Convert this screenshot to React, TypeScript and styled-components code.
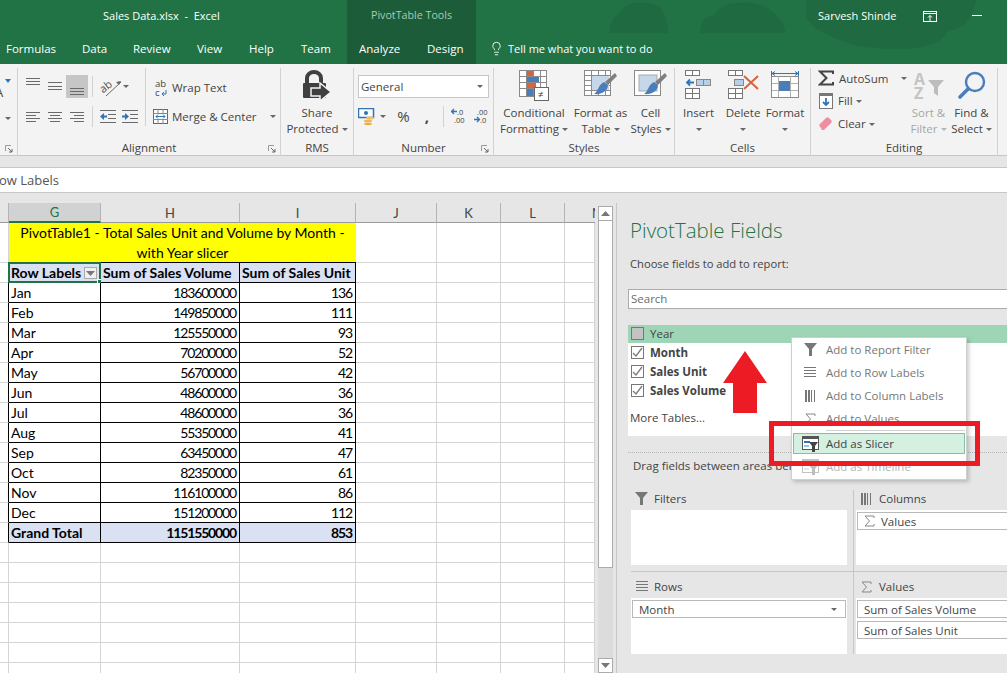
import React from 'react';
import styled, { createGlobalStyle } from 'styled-components';
import { Lightbulb } from 'lucide-react';

const UI_FONT = '"Open Sans", "Noto Sans", sans-serif';
const CELL_FONT = 'Lato, "Liberation Sans", sans-serif';

const GlobalStyle = createGlobalStyle`
  html, body { margin: 0; padding: 0; background: #e6e6e6; }
  * { box-sizing: border-box; }
`;

const Page = styled.div`
  position: relative;
  width: 1007px;
  height: 673px;
  overflow: hidden;
  display: flex;
  flex-direction: column;
  font-family: ${UI_FONT};
  font-size: 11.5px;
  color: #444;
`;

/* ---------- header ---------- */

const Header = styled.header`
  position: relative;
  height: 64px;
  background: #217346;
  color: #fff;
`;

const HeaderArt = styled.svg`
  position: absolute;
  left: 0;
  top: 0;
`;

const BarRow = styled.div`
  position: relative;
  height: 32px;
  display: flex;
  align-items: center;
`;

const FileTitle = styled.div`
  width: 347px;
  margin-top: -2px;
  padding-left: 103px;
  font-size: 11px;
  white-space: pre;
`;

const ContextBand = styled.div<{ $muted?: boolean }>`
  width: 129px;
  height: 32px;
  background: #1c5c38;
  display: flex;
  align-items: center;
  justify-content: ${({ $muted }) => ($muted ? 'center' : 'flex-start')};
  padding: ${({ $muted }) => ($muted ? '0 0 2px' : '0 0 0 12px')};
  font-size: ${({ $muted }) => ($muted ? '10.7px' : '11.5px')};
  color: ${({ $muted }) => ($muted ? '#a5cdb5' : '#fff')};
`;

const UserName = styled.div`
  margin: -2px 0 0 auto;
  width: 105px;
  font-size: 11px;
`;

const WindowButton = styled.div<{ $w: number }>`
  width: ${({ $w }) => $w}px;
  display: flex;
`;

const TabStrip = styled.nav`
  width: 347px;
  height: 32px;
  display: flex;
  align-items: center;
  padding-left: 6px;
`;

const Tab = styled.div<{ $w: number }>`
  width: ${({ $w }) => $w}px;
`;

const TellMe = styled.div`
  display: flex;
  align-items: center;
  gap: 4px;
  padding-left: 13px;
  font-size: 11px;
`;

/* ---------- ribbon ---------- */

const Ribbon = styled.section`
  height: 92px;
  background: #f3f3f3;
  border-bottom: 1px solid #c6c6c6;
  display: flex;
  flex: none;
`;

const Group = styled.div<{ $w: number }>`
  position: relative;
  width: ${({ $w }) => $w}px;
  height: 88px;
  margin-top: 4px;
  border-right: 1px solid #d2d2d2;
  display: flex;
  flex-direction: column;
  flex: none;
`;

const GroupBody = styled.div`
  flex: 1;
  display: flex;
  min-height: 0;
`;

const GroupLabel = styled.div`
  height: 15px;
  line-height: 14px;
  text-align: center;
`;

const Launcher = styled.svg`
  position: absolute;
  right: 4px;
  bottom: 3px;
`;

const PartialTools = styled.div`
  display: flex;
  flex-direction: column;
  padding: 11px 0 0 5px;
  gap: 24px;
`;

const PartialFont = styled.div`
  display: flex;
  align-items: flex-start;
  gap: 2px;
  height: 14px;
  margin-left: -10px;
  font-size: 13px;
  line-height: 26px;
`;

const BigButton = styled.div<{ $w: number; $off?: boolean }>`
  width: ${({ $w }) => $w}px;
  flex: none;
  display: flex;
  flex-direction: column;
  align-items: center;
  text-align: center;
  white-space: nowrap;
  line-height: 16px;
  color: ${({ $off }) => ($off ? '#a6a6a6' : '#444')};
`;

const BigIcon = styled.div`
  height: 33px;
  margin: 2px 0;
  display: flex;
  align-items: flex-start;
  justify-content: center;
`;

const Caret = styled.span<{ $gap?: number; $off?: boolean }>`
  display: inline-block;
  width: 0;
  height: 0;
  margin-left: ${({ $gap }) => $gap ?? 3}px;
  vertical-align: 2px;
  border-left: 3px solid transparent;
  border-right: 3px solid transparent;
  border-top: 3px solid ${({ $off }) => ($off ? '#b5b5b5' : '#666')};
`;

const AlignColumn = styled.div`
  width: 128px;
  height: 58px;
  display: flex;
  flex-direction: column;
  gap: 7px;
  padding: 7px 0 0 4px;
  border-right: 1px solid #d2d2d2;
  flex: none;
`;

const IconRow = styled.div`
  display: flex;
  align-items: center;
  height: 23px;
`;

const IconCell = styled.div<{ $w?: number; $on?: boolean }>`
  width: ${({ $w }) => $w ?? 22}px;
  height: 23px;
  flex: none;
  display: flex;
  align-items: center;
  justify-content: center;
  background: ${({ $on }) => ($on ? '#c6c6c6' : 'transparent')};
`;

const MiniRule = styled.div`
  width: 1px;
  height: 21px;
  background: #d2d2d2;
  margin: 0 4px;
  flex: none;
`;

const WrapColumn = styled.div`
  flex: 1;
  display: flex;
  flex-direction: column;
  gap: 6px;
  padding: 8px 0 0 7px;
`;

const SmallAction = styled.div`
  display: flex;
  align-items: center;
  gap: 4px;
  height: 23px;
  white-space: nowrap;
`;

const EditingColumn = styled.div`
  width: 97px;
  flex: none;
  display: flex;
  flex-direction: column;
  margin-top: -1px;
  padding-left: 7px;

  ${SmallAction} {
    height: 22.5px;
    gap: 5px;
  }
`;

const NumberColumn = styled.div`
  flex: 1;
  padding: 7px 5px 0 4px;
`;

const NumberFormat = styled.div`
  height: 23px;
  width: 131px;
  background: #fff;
  border: 1px solid #c6c6c6;
  padding: 0 5px 0 2px;
  display: flex;
  align-items: center;
  justify-content: space-between;
`;

const NumberTools = styled.div`
  display: flex;
  align-items: center;
  margin-top: 6px;
  height: 24px;
`;

const Percent = styled.span`
  font-size: 15px;
  width: 27px;
  text-align: center;
  margin-left: 4px;
`;

const Comma = styled.span`
  font-size: 15px;
  font-weight: 700;
  width: 20px;
  text-align: center;
  line-height: 10px;
`;

const NumberRule = styled(MiniRule)`
  margin: 0 7px 0 6px;
`;

const DecimalGap = styled.span`
  width: 8px;
`;

/* ---------- formula bar ---------- */

const Gutter = styled.div`
  height: 11px;
  flex: none;
  background: #e6e6e6;
`;

const FormulaBar = styled.div`
  height: 26px;
  flex: none;
  background: #fff;
  border-top: 1px solid #c6c6c6;
  border-bottom: 1px solid #c6c6c6;
  display: flex;
  align-items: center;
  font-size: 13px;
  color: #555;
`;

const FormulaText = styled.div`
  margin-left: -1px;
`;

/* ---------- sheet ---------- */

const Workspace = styled.main`
  flex: 1;
  min-height: 0;
  display: flex;
`;

const SheetArea = styled.div`
  width: 598px;
  flex: none;
  padding-top: 10px;
  overflow: hidden;
  background: #e6e6e6;
`;

const SheetGrid = styled.div`
  display: grid;
  width: 595px;
  grid-template-columns: 9px 92px 139px 116px 81px 64px 64px 30px;
  grid-auto-rows: 20px;
  background: #fff;
  border-right: 1px solid #ababab;
  font-family: ${CELL_FONT};
  font-size: 14px;
  color: #000;
`;

const ColumnHead = styled.div<{ $active?: boolean; $clip?: boolean }>`
  height: 20px;
  display: flex;
  align-items: center;
  justify-content: ${({ $clip }) => ($clip ? 'flex-start' : 'center')};
  padding-left: ${({ $clip }) => ($clip ? 27 : 0)}px;
  overflow: hidden;
  font-size: 13px;
  background: ${({ $active }) => ($active ? '#d2d2d2' : '#e6e6e6')};
  color: ${({ $active }) => ($active ? '#217346' : '#444')};
  border-right: ${({ $clip }) => ($clip ? 'none' : '1px solid #b4b4b4')};
  border-bottom: ${({ $active }) => ($active ? '2px solid #217346' : '1px solid #9b9b9b')};
`;

const MergedTitle = styled.div`
  grid-column: span 3;
  grid-row: span 2;
  background: #ff0;
  border-bottom: 1px solid #000;
  text-align: center;
  line-height: 20px;
  padding: 0 8px;
`;

const TallCell = styled.div`
  grid-row: span 2;
  border-right: 1px solid #d4d4d4;
  border-bottom: 1px solid #d4d4d4;
`;

const BlankCell = styled.div<{ $dark?: boolean }>`
  border-right: 1px solid ${({ $dark }) => ($dark ? '#000' : '#d4d4d4')};
  border-bottom: 1px solid #d4d4d4;
`;

const PivotCell = styled.div<{ $right?: boolean; $head?: boolean; $bold?: boolean }>`
  position: relative;
  display: flex;
  align-items: center;
  justify-content: ${({ $right }) => ($right ? 'flex-end' : 'flex-start')};
  padding: 0 2px;
  white-space: nowrap;
  border-right: 1px solid #000;
  border-bottom: 1px solid #000;
  font-weight: ${({ $bold }) => ($bold ? 700 : 400)};
  background: ${({ $head }) => ($head ? '#d9e1f2' : '#fff')};
`;

const Amount = styled.span`
  letter-spacing: -1.15px;
  padding-right: 1px;
`;

const SelectionFrame = styled.div`
  position: absolute;
  inset: -1px;
  border: 2px solid #217346;
  pointer-events: none;
`;

const FillHandle = styled.div`
  position: absolute;
  right: -4px;
  bottom: -4px;
  width: 6px;
  height: 6px;
  background: #217346;
  border: 1px solid #fff;
`;

const FilterDrop = styled.div`
  position: absolute;
  right: 3px;
  top: 4px;
  width: 13px;
  height: 12px;
  background: #f0f0f0;
  border: 1px solid #ababab;
  display: flex;
  align-items: center;
  justify-content: center;
`;

const ScrollBar = styled.div`
  width: 15px;
  flex: none;
  margin-top: 13px;
  display: flex;
  flex-direction: column;
  background: #dcdcdc;
`;

const ScrollStep = styled.div`
  height: 15px;
  flex: none;
  background: #fff;
  border: 1px solid #ababab;
  display: flex;
  align-items: center;
  justify-content: center;
`;

const ScrollThumb = styled.div`
  height: 347px;
  flex: none;
  background: #fff;
  border: 1px solid #ababab;
  border-top-width: 0;
  margin-bottom: auto;
`;

/* ---------- field panel ---------- */

const FieldPanel = styled.aside`
  flex: 1;
  min-width: 0;
  margin-left: 3px;
  margin-top: 10px;
  border-left: 1px solid #c6c6c6;
  padding-left: 11px;
  background: #e6e6e6;
  overflow: hidden;
`;

const PanelTitle = styled.h2`
  margin: 13px 0 0 2px;
  font-weight: 300;
  font-size: 20.5px;
  line-height: 28px;
  color: #217346;
  white-space: nowrap;
`;

const PanelHint = styled.div`
  margin: 12px 0 0 2px;
  line-height: 16px;
  font-size: 11.2px;
`;

const SearchBox = styled.div`
  margin-top: 17px;
  height: 20px;
  background: #fff;
  border: 1px solid #ababab;
  border-right: none;
  padding-left: 2px;
  line-height: 17px;
  color: #6d6d6d;
`;

const FieldList = styled.div`
  margin-top: 16px;
  height: 111px;
  background: #fff;
`;

const FieldRow = styled.div<{ $hot?: boolean; $bold?: boolean }>`
  height: ${({ $hot }) => ($hot ? 18 : 19)}px;
  display: flex;
  align-items: center;
  gap: 6px;
  padding: 0 0 ${({ $hot }) => ($hot ? 1 : 0)}px 3px;
  background: ${({ $hot }) => ($hot ? '#9fd5b7' : 'transparent')};
  font-weight: ${({ $bold }) => ($bold ? 700 : 400)};
`;

const CheckBox = styled.div<{ $hot?: boolean }>`
  width: 13px;
  height: 13px;
  flex: none;
  background: ${({ $hot }) => ($hot ? '#c3c3c3' : '#fff')};
  border: 1px solid #777;
  display: flex;
  align-items: center;
  justify-content: center;
`;

const MoreTables = styled.div`
  margin: 9px 0 0 2px;
  line-height: 18px;
`;

const DropHint = styled.div`
  margin-top: 16px;
  padding: 5px 0 0 5px;
  border-top: 1px dotted #b5b5b5;
  line-height: 16px;
  white-space: nowrap;
`;

const Areas = styled.div`
  margin: 16px 0 0 3px;
  display: grid;
  grid-template-columns: 223px 1fr;
  grid-template-rows: 82px 82px;
`;

const Area = styled.div<{ $left?: boolean; $top?: boolean }>`
  display: flex;
  flex-direction: column;
  border-right: ${({ $left }) => ($left ? '1px solid #c6c6c6' : 'none')};
  border-bottom: ${({ $top }) => ($top ? '1px solid #c6c6c6' : 'none')};
  padding: ${({ $top }) => ($top ? '0' : '6px')} ${({ $left }) => ($left ? '6px' : '0')} ${({ $top }) => ($top ? '6px' : '0')} ${({ $left }) => ($left ? '0' : '2px')};
`;

const AreaHead = styled.div`
  height: 20px;
  flex: none;
  display: flex;
  align-items: center;
  gap: 6px;
  padding: 0 0 3px 4px;
`;

const AreaIcon = styled.div`
  width: 13px;
  display: flex;
  justify-content: center;
`;

const AreaWell = styled.div`
  flex: 1;
  background: #fff;
  padding-top: 2px;
  display: flex;
  flex-direction: column;
  gap: 3px;
`;

const AreaItem = styled.div<{ $bleed?: boolean }>`
  height: 18px;
  margin: 0 ${({ $bleed }) => ($bleed ? -4 : 1)}px 0 1px;
  border: 1px solid #b9b9b9;
  display: flex;
  align-items: center;
  gap: 6px;
  padding: 0 8px 0 6px;
  white-space: nowrap;
  background: #fff;
`;

const ItemCaret = styled(Caret)`
  margin-left: auto;
`;

/* ---------- overlays ---------- */

const ContextMenu = styled.div`
  position: absolute;
  left: 791px;
  top: 337px;
  width: 176px;
  height: 143px;
  padding: 0 1px;
  background: #fff;
  border: 1px solid #d0d0d0;
  box-shadow: 2px 2px 4px rgba(0, 0, 0, 0.2);
`;

const MenuItem = styled.div<{ $on?: boolean; $off?: boolean }>`
  height: ${({ $on }) => ($on ? 21 : 23)}px;
  margin-top: ${({ $off }) => ($off ? 1 : 0)}px;
  display: flex;
  align-items: center;
  border: 1px solid ${({ $on }) => ($on ? '#86bfa0' : 'transparent')};
  background: ${({ $on }) => ($on ? '#d3f0e0' : 'transparent')};
  color: ${({ $on, $off }) => ($on ? '#444' : $off ? '#b4b4b4' : '#777')};
  white-space: nowrap;
`;

const MenuGlyph = styled.div<{ $off?: boolean }>`
  width: 32px;
  display: flex;
  justify-content: center;
  flex: none;
  opacity: ${({ $off }) => ($off ? 0.35 : 1)};
`;

const MenuRule = styled.div`
  height: 1px;
  margin: 0 0 2px 33px;
  background: #d0d0d0;
`;

const RedBox = styled.div`
  position: absolute;
  left: 769px;
  top: 421px;
  width: 211px;
  height: 45px;
  border: 5px solid #ed1c24;
`;

const RedArrow = styled.svg`
  position: absolute;
  left: 723px;
  top: 351px;
`;

/* ---------- drawings ---------- */

const Lines = ({ rows }: { rows: number[] }) => (
  <svg width="14" height="18">
    {rows.map(y => (
      <line key={y} x1="0" x2="14" y1={y + 0.5} y2={y + 0.5} stroke="#6a6a6a" />
    ))}
  </svg>
);

const AlignedLines = ({ rows }: { rows: [number, number, number][] }) => (
  <svg width="14" height="14">
    {rows.map(([y, from, to]) => (
      <line key={y} x1={from} x2={to} y1={y + 0.5} y2={y + 0.5} stroke="#6a6a6a" />
    ))}
  </svg>
);

const Indent = ({ flip }: { flip?: boolean }) => (
  <svg width="16" height="13">
    <g stroke="#6a6a6a">
      <line x1="0" x2="16" y1="0.5" y2="0.5" />
      <line x1="8" x2="16" y1="4.5" y2="4.5" />
      <line x1="8" x2="16" y1="8.5" y2="8.5" />
      <line x1="0" x2="16" y1="12.5" y2="12.5" />
    </g>
    <path d={flip ? 'M0 5.5h3V3l4 3.5-4 3.5V7.500H0z' : 'M7 5.500H4V3L0 6.500 4 10V7.500h3z'} fill="#2f75b5" />
  </svg>
);

const Orientation = () => (
  <svg width="26" height="22">
    <text x="3" y="15" fontSize="11" fontFamily="Open Sans" fill="#555" transform="rotate(-38 8 12)">ab</text>
    <line x1="9" y1="20" x2="24" y2="6" stroke="#666" />
    <path d="M24 5l-5 1 3 3z" fill="#666" />
  </svg>
);

const WrapGlyph = () => (
  <svg width="15" height="22">
    <text fontSize="9.500" fontFamily="Open Sans" fill="#444">
      <tspan x="2" y="10">ab</tspan>
      <tspan x="2" y="19">c</tspan>
    </text>
    <path d="M13 13v4H9m2-2l-2 2 2 2" fill="none" stroke="#2f75b5" />
  </svg>
);

const MergeGlyph = () => (
  <svg width="15" height="15">
    <rect x="0.500" y="0.500" width="14" height="14" fill="#fff" stroke="#666" />
    <path d="M0 4.500h15M0 10.500h15M5 0v4M10 0v4M5 11v4M10 11v4" stroke="#888" />
    <path d="M3 7.500h9M5 5.500l-2 2 2 2M10 5.500l2 2-2 2" fill="none" stroke="#2f75b5" />
  </svg>
);

const LockShare = () => (
  <svg width="30" height="32">
    <path d="M5 14V8a7 6 0 0 1 14 0v6" fill="none" stroke="#404040" strokeWidth="4" />
    <rect x="1" y="13" width="23" height="15" rx="1" fill="#404040" />
    <path d="M9 18h9v-5l11 9-11 9v-5H9z" fill="#404040" stroke="#f3f3f3" strokeWidth="1.500" />
  </svg>
);

const Currency = () => (
  <svg width="17" height="17">
    <rect x="0.500" y="0.500" width="15" height="9" fill="#fff" stroke="#2f75b5" strokeWidth="1.500" />
    <circle cx="8" cy="5" r="2" fill="#2f75b5" />
    <ellipse cx="12" cy="10" rx="4" ry="1.500" fill="#f2c060" />
    <ellipse cx="10" cy="13" rx="4" ry="1.500" fill="#f2b84f" />
    <ellipse cx="10" cy="16" rx="4" ry="1" fill="#eba83a" />
  </svg>
);

const Decimals = ({ more }: { more?: boolean }) => (
  <svg width="15" height="18">
    <text fontSize="7.500" fontFamily="Open Sans" fill="#444">
      <tspan x={more ? 3 : 6} y="7.500">{more ? '.00' : '.0'}</tspan>
      <tspan x={more ? 6 : 3} y="15.500">{more ? '.0' : '.00'}</tspan>
    </text>
    {more ? (
      <path d="M0 12.500h5M3 10l2.500 2.500L3 15" fill="none" stroke="#2f75b5" strokeWidth="1.300" />
    ) : (
      <path d="M6 4.500H1M3 2L.5 4.500 3 7" fill="none" stroke="#2f75b5" strokeWidth="1.300" />
    )}
  </svg>
);

const TableBase = ({ cols, rows }: { cols: number[]; rows: number[] }) => (
  <g stroke="#8a8a8a" fill="none">
    <rect x="0.500" y="0.500" width={cols[cols.length - 1]} height={rows[rows.length - 1]} fill="#fff" />
    {cols.slice(0, -1).map(c => <line key={c} x1={c + 0.5} x2={c + 0.5} y1="0" y2={rows[rows.length - 1]} />)}
    {rows.slice(0, -1).map(r => <line key={r} y1={r + 0.5} y2={r + 0.5} x1="0" x2={cols[cols.length - 1]} />)}
  </g>
);

const ConditionalIcon = () => (
  <svg width="31" height="31">
    <TableBase cols={[7, 14, 21, 27]} rows={[6, 12, 18, 26]} />
    <rect x="8" y="1" width="6" height="5" fill="#d9623f" />
    <rect x="8" y="7" width="12" height="5" fill="#4a7ebb" />
    <rect x="8" y="13" width="9" height="5" fill="#d9623f" />
    <rect x="8" y="19" width="6" height="7" fill="#4a7ebb" />
    <rect x="15.500" y="17.500" width="14" height="13" fill="#fff" stroke="#666" />
    <text x="19" y="27.500" fontSize="10" fontFamily="Open Sans" fill="#333">≠</text>
  </svg>
);

const Brush = () => (
  <g>
    <path d="M31 3l2 3-9 9-3-3z" fill="#7f7f7f" />
    <path d="M20 12l4 3c0 6-7 10-14 9 4-2 4-9 10-12z" fill="#4a7ebb" />
  </g>
);

const TableStyleIcon = () => (
  <svg width="33" height="29">
    <TableBase cols={[7, 14, 21, 26]} rows={[5, 10, 15, 20, 25]} />
    <rect x="8" y="6" width="17" height="14" fill="#c6d7ea" />
    <Brush />
  </svg>
);

const CellStyleIcon = () => (
  <svg width="33" height="29">
    <rect x="0.500" y="0.500" width="26" height="25" fill="#fff" stroke="#8a8a8a" />
    <rect x="5" y="5" width="18" height="16" fill="#c6d7ea" stroke="#aaa" />
    <Brush />
  </svg>
);

const InsertIcon = () => (
  <svg width="27" height="29">
    <g fill="#fff" stroke="#777">
      <rect x="0.500" y="0.500" width="7" height="5" />
      <rect x="7.500" y="0.500" width="7" height="5" />
      <rect x="0.500" y="18.500" width="14" height="10" />
      <line x1="7.500" x2="7.500" y1="18" y2="28" />
      <line x1="0" x2="14" y1="23.500" y2="23.500" />
    </g>
    <rect x="11.500" y="9.500" width="7" height="6" fill="#b9cfe6" stroke="#888" />
    <rect x="18.500" y="9.500" width="7" height="6" fill="#b9cfe6" stroke="#888" />
    <path d="M9 12.500H2m3-3l-3 3 3 3" fill="none" stroke="#2f75b5" strokeWidth="1.800" />
  </svg>
);

const DeleteIcon = () => (
  <svg width="31" height="29">
    <g fill="#fff" stroke="#777">
      <rect x="0.500" y="0.500" width="7" height="5" />
      <rect x="7.500" y="0.500" width="7" height="5" />
      <rect x="0.500" y="18.500" width="14" height="10" />
      <line x1="7.500" x2="7.500" y1="18" y2="28" />
      <line x1="0" x2="14" y1="23.500" y2="23.500" />
    </g>
    <rect x="6.500" y="9.500" width="9" height="6" fill="#b9cfe6" stroke="#888" />
    <path d="M16 6l14 13M30 6L16 19" stroke="#d9623f" strokeWidth="2" />
  </svg>
);

const FormatIcon = () => (
  <svg width="29" height="31">
    <path d="M1 3.500h26M.5 1v5M27.500 1v5M4 1.500L1 3.500 4 5.500M24 1.500l3 2-3 2" fill="none" stroke="#2f75b5" />
    <rect x="0.500" y="6.500" width="27" height="21" fill="#fff" stroke="#8a8a8a" />
    <path d="M7.500 6v21M19.500 6v21M1 13.500h26M1 20.500h26" stroke="#b0b0b0" />
    <rect x="8" y="11" width="11" height="10" fill="#4a7ebb" />
  </svg>
);

const SigmaIcon = () => (
  <svg width="16" height="16">
    <path d="M15 4V1.500H2L8.500 8 2 14.500h13V12" fill="none" stroke="#444" strokeWidth="2" />
  </svg>
);

const FillIcon = () => (
  <svg width="15" height="16">
    <rect x="1.500" y="0.500" width="13" height="15" fill="#fff" stroke="#777" />
    <rect x="1" y="0" width="14" height="3" fill="#777" />
    <path d="M8 5v7M5 9l3 3 3-3" fill="none" stroke="#2f75b5" strokeWidth="1.800" />
  </svg>
);

const EraserIcon = () => (
  <svg width="15" height="14">
    <path d="M1 9l7-7c1-1 2-1 3 0l2 2c1 1 1 2 0 3l-7 7H4z" fill="#ee8ea0" />
  </svg>
);

const SortIcon = () => (
  <svg width="30" height="33" overflow="visible">
    <text fontSize="16" fontWeight="700" fontFamily="Open Sans" fill="#c4c4c4">
      <tspan x="0" y="15">A</tspan>
      <tspan x="0" y="29">Z</tspan>
    </text>
    <path d="M14 10h16l-6 7v9l-4-3v-6z" fill="#bdbdbd" />
  </svg>
);

const FindIcon = () => (
  <svg width="30" height="31">
    <circle cx="18" cy="12" r="9" fill="none" stroke="#4a7ebb" strokeWidth="2.400" />
    <path d="M11 19L3 27" stroke="#4a7ebb" strokeWidth="3.600" strokeLinecap="round" />
  </svg>
);

const LauncherGlyph = () => (
  <Launcher width="8" height="8">
    <path d="M0.500 6V.5H6" fill="none" stroke="#9a9a9a" />
    <path d="M3 3l4 4M7 4v3H4" fill="none" stroke="#666" />
  </Launcher>
);

const FunnelIcon = () => (
  <svg width="13" height="13">
    <path d="M0 0h13L8 6v7H5V6z" fill="#777" />
  </svg>
);

const RowsIcon = () => (
  <svg width="12" height="11">
    <path d="M0 .5h12M0 3.500h12M0 6.500h12M0 9.500h12" stroke="#777" />
  </svg>
);

const ColumnsIcon = () => (
  <svg width="11" height="12">
    <path d="M1 0v12M4 0v12" stroke="#777" strokeWidth="2" />
    <path d="M6.500 0v12M9.500 0v12" stroke="#777" />
  </svg>
);

const SigmaSmall = () => (
  <svg width="11" height="12">
    <path d="M10 3V1H1l4.500 5L1 11h9V9" fill="none" stroke="#888" />
  </svg>
);

const SlicerIcon = () => (
  <svg width="17" height="16">
    <rect x="0.500" y="0.500" width="16" height="13" fill="#fff" stroke="#555" />
    <rect x="0" y="0" width="17" height="3" fill="#555" />
    <rect x="2" y="5" width="6" height="2" fill="#2f75b5" />
    <rect x="2" y="9" width="5" height="2" fill="#9cc2e5" />
    <path d="M7 6h9l-3 4v6h-3v-6z" fill="#444" />
  </svg>
);

const TinyUp = () => (
  <svg width="9" height="5"><path d="M4.500 0L9 5H0z" fill="#777" /></svg>
);

const TinyDown = () => (
  <svg width="9" height="5"><path d="M0 0h9L4.500 5z" fill="#777" /></svg>
);

const Tick = () => (
  <svg width="11" height="11">
    <path d="M1 6l3 3 6-8" fill="none" stroke="#7a7a7a" strokeWidth="1.300" />
  </svg>
);

/* ---------- data ---------- */

const months: [string, string, string][] = [
  ['Jan', '183600000', '136'],
  ['Feb', '149850000', '111'],
  ['Mar', '125550000', '93'],
  ['Apr', '70200000', '52'],
  ['May', '56700000', '42'],
  ['Jun', '48600000', '36'],
  ['Jul', '48600000', '36'],
  ['Aug', '55350000', '41'],
  ['Sep', '63450000', '47'],
  ['Oct', '82350000', '61'],
  ['Nov', '116100000', '86'],
  ['Dec', '151200000', '112'],
];

const tabs: [string, number][] = [
  ['Formulas', 76],
  ['Data', 51],
  ['Review', 64],
  ['View', 52],
  ['Help', 52],
  ['Team', 46],
];

const SpareCells = () => (
  <>
    <BlankCell />
    <BlankCell />
    <BlankCell />
    <BlankCell />
  </>
);

const App: React.FC = () => (
  <Page>
    <GlobalStyle />
    <Header>
      <HeaderArt width="1007" height="64">
        <path d="M610 33c0-8 2-16 10-20 4-8 14-12 26-10 12 0 22 8 22 30zM700 33c0-10 4-16 14-18 6-8 12-12 24-12 14-2 30 2 38 12 6 6 9 12 9 18z" fill="#1f6a40" />
        <path d="M806 0h170c-2 10-6 20-14 26-6 4-12 3-16 8-8 12-28 15-46 15-24 0-42-2-52-6-18-6-36-14-42-26z" fill="#1f6a40" />
      </HeaderArt>
      <BarRow>
        <FileTitle>Sales Data.xlsx  -  Excel</FileTitle>
        <ContextBand $muted>PivotTable Tools</ContextBand>
        <UserName>Sarvesh Shinde</UserName>
        <WindowButton $w={49}>
          <svg width="14" height="11">
            <rect x="0.500" y="0.500" width="13" height="10" fill="none" stroke="#fff" />
            <path d="M0 2.500h14M7 10V4.500M5 6.500l2-2 2 2" fill="none" stroke="#fff" />
          </svg>
        </WindowButton>
        <WindowButton $w={35}>
          <svg width="10" height="2"><rect width="10" height="1" fill="#fff" /></svg>
        </WindowButton>
      </BarRow>
      <BarRow>
        <TabStrip>
          {tabs.map(([label, w]) => (
            <Tab key={label} $w={w}>{label}</Tab>
          ))}
        </TabStrip>
        <ContextBand>
          <Tab $w={68}>Analyze</Tab>
          <Tab $w={49}>Design</Tab>
        </ContextBand>
        <TellMe>
          <Lightbulb size={15} strokeWidth={1.4} />
          Tell me what you want to do
        </TellMe>
      </BarRow>
    </Header>

    <Ribbon>
      <Group $w={18}>
        <GroupBody>
          <PartialTools>
            <PartialFont>
              A
              <svg width="6" height="4"><path d="M0 0h6L3 4z" fill="#2f75b5" /></svg>
            </PartialFont>
            <Caret $gap={0} />
          </PartialTools>
        </GroupBody>
        <GroupLabel />
        <LauncherGlyph />
      </Group>

      <Group $w={263}>
        <GroupBody>
          <AlignColumn>
            <IconRow>
              <IconCell><Lines rows={[0, 3, 6]} /></IconCell>
              <IconCell><Lines rows={[4, 8, 11]} /></IconCell>
              <IconCell $on><Lines rows={[10, 13, 16]} /></IconCell>
              <MiniRule />
              <IconCell $w={26}><Orientation /></IconCell>
              <Caret $gap={0} />
            </IconRow>
            <IconRow>
              <IconCell><AlignedLines rows={[[2, 0, 14], [5, 0, 10], [8, 0, 14], [11, 0, 10]]} /></IconCell>
              <IconCell><AlignedLines rows={[[2, 0, 14], [5, 2, 12], [8, 0, 14], [11, 2, 12]]} /></IconCell>
              <IconCell><AlignedLines rows={[[2, 0, 14], [5, 4, 14], [8, 0, 14], [11, 4, 14]]} /></IconCell>
              <MiniRule />
              <IconCell><Indent /></IconCell>
              <IconCell><Indent flip /></IconCell>
            </IconRow>
          </AlignColumn>
          <WrapColumn>
            <SmallAction><WrapGlyph />Wrap Text</SmallAction>
            <SmallAction><MergeGlyph />Merge &amp; Center<Caret $gap={9} /></SmallAction>
          </WrapColumn>
        </GroupBody>
        <GroupLabel>Alignment</GroupLabel>
        <LauncherGlyph />
      </Group>

      <Group $w={73}>
        <GroupBody>
          <BigButton $w={72}>
            <BigIcon><LockShare /></BigIcon>
            Share
            <span>Protected<Caret /></span>
          </BigButton>
        </GroupBody>
        <GroupLabel>RMS</GroupLabel>
      </Group>

      <Group $w={140}>
        <GroupBody>
          <NumberColumn>
            <NumberFormat>General<Caret /></NumberFormat>
            <NumberTools>
              <Currency />
              <Caret $gap={5} />
              <Percent>%</Percent>
              <Comma>,</Comma>
              <NumberRule />
              <Decimals />
              <DecimalGap />
              <Decimals more />
            </NumberTools>
          </NumberColumn>
        </GroupBody>
        <GroupLabel>Number</GroupLabel>
        <LauncherGlyph />
      </Group>

      <Group $w={181}>
        <GroupBody>
          <BigButton $w={80}>
            <BigIcon><ConditionalIcon /></BigIcon>
            Conditional
            <span>Formatting<Caret /></span>
          </BigButton>
          <BigButton $w={53}>
            <BigIcon><TableStyleIcon /></BigIcon>
            Format as
            <span>Table<Caret /></span>
          </BigButton>
          <BigButton $w={47}>
            <BigIcon><CellStyleIcon /></BigIcon>
            Cell
            <span>Styles<Caret /></span>
          </BigButton>
        </GroupBody>
        <GroupLabel>Styles</GroupLabel>
      </Group>

      <Group $w={136}>
        <GroupBody>
          <BigButton $w={47}>
            <BigIcon><InsertIcon /></BigIcon>
            Insert
            <span><Caret $gap={0} /></span>
          </BigButton>
          <BigButton $w={42}>
            <BigIcon><DeleteIcon /></BigIcon>
            Delete
            <span><Caret $gap={0} /></span>
          </BigButton>
          <BigButton $w={42}>
            <BigIcon><FormatIcon /></BigIcon>
            Format
            <span><Caret $gap={0} /></span>
          </BigButton>
        </GroupBody>
        <GroupLabel>Cells</GroupLabel>
      </Group>

      <Group $w={187}>
        <GroupBody>
          <EditingColumn>
            <SmallAction><SigmaIcon />AutoSum<Caret $gap={8} /></SmallAction>
            <SmallAction><FillIcon /><span>Fill<Caret /></span></SmallAction>
            <SmallAction><EraserIcon /><span>Clear<Caret /></span></SmallAction>
          </EditingColumn>
          <BigButton $w={41} $off>
            <BigIcon><SortIcon /></BigIcon>
            Sort &amp;
            <span>Filter<Caret $off /></span>
          </BigButton>
          <BigButton $w={45}>
            <BigIcon><FindIcon /></BigIcon>
            Find &amp;
            <span>Select<Caret /></span>
          </BigButton>
        </GroupBody>
        <GroupLabel>Editing</GroupLabel>
      </Group>
    </Ribbon>

    <Gutter />
    <FormulaBar><FormulaText>ow Labels</FormulaText></FormulaBar>

    <Workspace>
      <SheetArea>
        <SheetGrid>
          <ColumnHead />
          <ColumnHead $active>G</ColumnHead>
          <ColumnHead>H</ColumnHead>
          <ColumnHead>I</ColumnHead>
          <ColumnHead>J</ColumnHead>
          <ColumnHead>K</ColumnHead>
          <ColumnHead>L</ColumnHead>
          <ColumnHead $clip>M</ColumnHead>

          <TallCell />
          <MergedTitle>PivotTable1 - Total Sales Unit and Volume by Month - with Year slicer</MergedTitle>
          <TallCell />
          <TallCell />
          <TallCell />
          <TallCell />

          <BlankCell $dark />
          <PivotCell $head $bold>
            Row Labels
            <FilterDrop><TinyDown /></FilterDrop>
            <SelectionFrame><FillHandle /></SelectionFrame>
          </PivotCell>
          <PivotCell $head $bold>Sum of Sales Volume</PivotCell>
          <PivotCell $head $bold>Sum of Sales Unit</PivotCell>
          <SpareCells />

          {months.map(([month, volume, unit]) => (
            <React.Fragment key={month}>
              <BlankCell $dark />
              <PivotCell>{month}</PivotCell>
              <PivotCell $right><Amount>{volume}</Amount></PivotCell>
              <PivotCell $right><Amount>{unit}</Amount></PivotCell>
              <SpareCells />
            </React.Fragment>
          ))}

          <BlankCell $dark />
          <PivotCell $head $bold>Grand Total</PivotCell>
          <PivotCell $head $bold $right><Amount>1151550000</Amount></PivotCell>
          <PivotCell $head $bold $right><Amount>853</Amount></PivotCell>
          <SpareCells />

          {Array.from({ length: 7 }, (_, i) => (
            <React.Fragment key={i}>
              <SpareCells />
              <SpareCells />
            </React.Fragment>
          ))}
        </SheetGrid>
      </SheetArea>

      <ScrollBar>
        <ScrollStep><TinyUp /></ScrollStep>
        <ScrollThumb />
        <ScrollStep><TinyDown /></ScrollStep>
      </ScrollBar>

      <FieldPanel>
        <PanelTitle>PivotTable Fields</PanelTitle>
        <PanelHint>Choose fields to add to report:</PanelHint>
        <SearchBox>Search</SearchBox>
        <FieldList>
          <FieldRow $hot><CheckBox $hot />Year</FieldRow>
          <FieldRow $bold><CheckBox><Tick /></CheckBox>Month</FieldRow>
          <FieldRow $bold><CheckBox><Tick /></CheckBox>Sales Unit</FieldRow>
          <FieldRow $bold><CheckBox><Tick /></CheckBox>Sales Volume</FieldRow>
          <MoreTables>More Tables...</MoreTables>
        </FieldList>
        <DropHint>Drag fields between areas below:</DropHint>
        <Areas>
          <Area $left $top>
            <AreaHead><AreaIcon><FunnelIcon /></AreaIcon>Filters</AreaHead>
            <AreaWell />
          </Area>
          <Area $top>
            <AreaHead><AreaIcon><ColumnsIcon /></AreaIcon>Columns</AreaHead>
            <AreaWell>
              <AreaItem $bleed><SigmaSmall />Values</AreaItem>
            </AreaWell>
          </Area>
          <Area $left>
            <AreaHead><AreaIcon><RowsIcon /></AreaIcon>Rows</AreaHead>
            <AreaWell>
              <AreaItem>Month<ItemCaret /></AreaItem>
            </AreaWell>
          </Area>
          <Area>
            <AreaHead><AreaIcon><SigmaSmall /></AreaIcon>Values</AreaHead>
            <AreaWell>
              <AreaItem $bleed>Sum of Sales Volume</AreaItem>
              <AreaItem $bleed>Sum of Sales Unit</AreaItem>
            </AreaWell>
          </Area>
        </Areas>
      </FieldPanel>
    </Workspace>

    <RedArrow width="44" height="62">
      <path d="M22 0l22 32H34v30H10V32H0z" fill="#ed1c24" />
    </RedArrow>

    <ContextMenu>
      <MenuItem><MenuGlyph><FunnelIcon /></MenuGlyph>Add to Report Filter</MenuItem>
      <MenuItem><MenuGlyph><RowsIcon /></MenuGlyph>Add to Row Labels</MenuItem>
      <MenuItem><MenuGlyph><ColumnsIcon /></MenuGlyph>Add to Column Labels</MenuItem>
      <MenuItem><MenuGlyph><SigmaSmall /></MenuGlyph>Add to Values</MenuItem>
      <MenuRule />
      <MenuItem $on><MenuGlyph><SlicerIcon /></MenuGlyph>Add as Slicer</MenuItem>
      <MenuItem $off><MenuGlyph $off><SlicerIcon /></MenuGlyph>Add as Timeline</MenuItem>
    </ContextMenu>
    <RedBox />
  </Page>
);

export default App;
